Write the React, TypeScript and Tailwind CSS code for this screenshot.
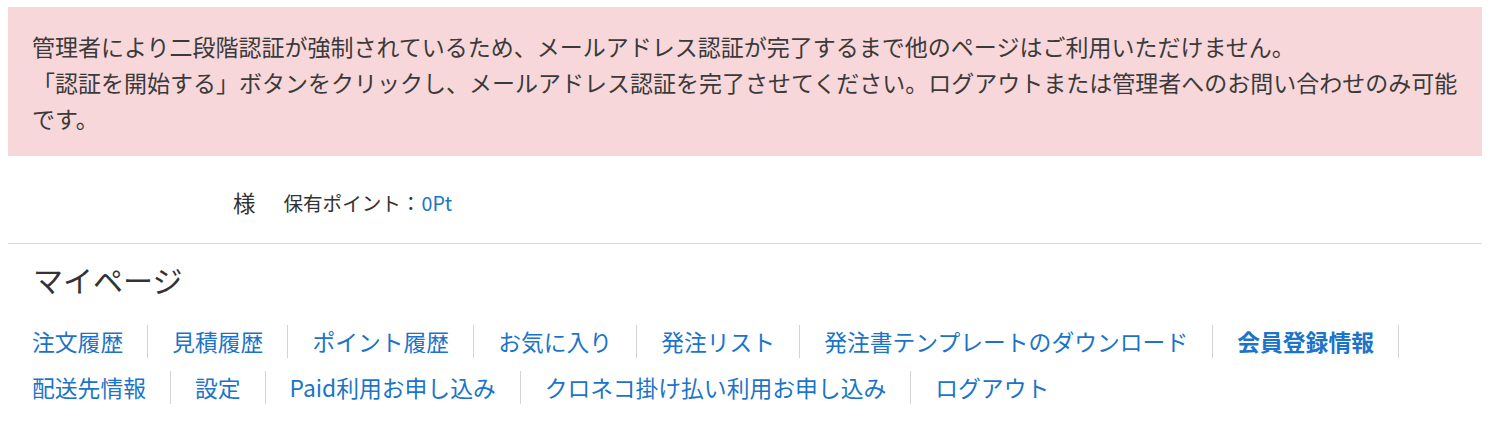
import React from "react";

const links = [
  { label: "注文履歴" },
  { label: "見積履歴" },
  { label: "ポイント履歴" },
  { label: "お気に入り" },
  { label: "発注リスト" },
  { label: "発注書テンプレートのダウンロード" },
  { label: "会員登録情報", bold: true },
  { label: "配送先情報" },
  { label: "設定" },
  { label: "Paid利用お申し込み" },
  { label: "クロネコ掛け払い利用お申し込み" },
  { label: "ログアウト" },
];

export default function App() {
  return (
    <div
      className="w-[1490px] h-[422px] bg-white px-2 pt-[7px] text-[#333333]"
      style={{ fontFamily: '"Noto Sans CJK JP", "Noto Sans", sans-serif' }}
    >
      <div className="bg-[#f8d7da] pl-6 pr-5 pt-[21px] pb-[20px] text-[23px] leading-[36px] text-[#3a3a3a]">
        <p>管理者により二段階認証が強制されているため、メールアドレス認証が完了するまで他のページはご利用いただけません。</p>
        <p>「認証を開始する」ボタンをクリックし、メールアドレス認証を完了させてください。ログアウトまたは管理者へのお問い合わせのみ可能です。</p>
      </div>

      <div className="mt-[30px] flex items-center pl-[225px] h-[33px]">
        <span className="text-[22.4px] leading-[33px]">様</span>
        <span className="ml-[28px] text-[19.6px] leading-[33px]">保有ポイント：</span>
        <span className="ml-[1px] text-[19.6px] leading-[33px] text-[#1b74c9]">0Pt</span>
      </div>

      <div className="mt-[24px] border-t border-[#dcdcdc]" />

      <h2 className="mt-[13px] pl-[25px] text-[30px] leading-[45px] text-[#333333]">マイページ</h2>

      <ul className="mt-[23px] flex flex-wrap gap-y-[13px]">
        {links.map((item) => (
          <li
            key={item.label}
            className={
              "border-r border-[#d4d4d4] last:border-r-0 px-6 text-[22.8px] leading-[33px] text-[#1b74c9] " +
              (item.bold ? "font-bold" : "")
            }
          >
            <a href="#">{item.label}</a>
          </li>
        ))}
      </ul>
    </div>
  );
}
